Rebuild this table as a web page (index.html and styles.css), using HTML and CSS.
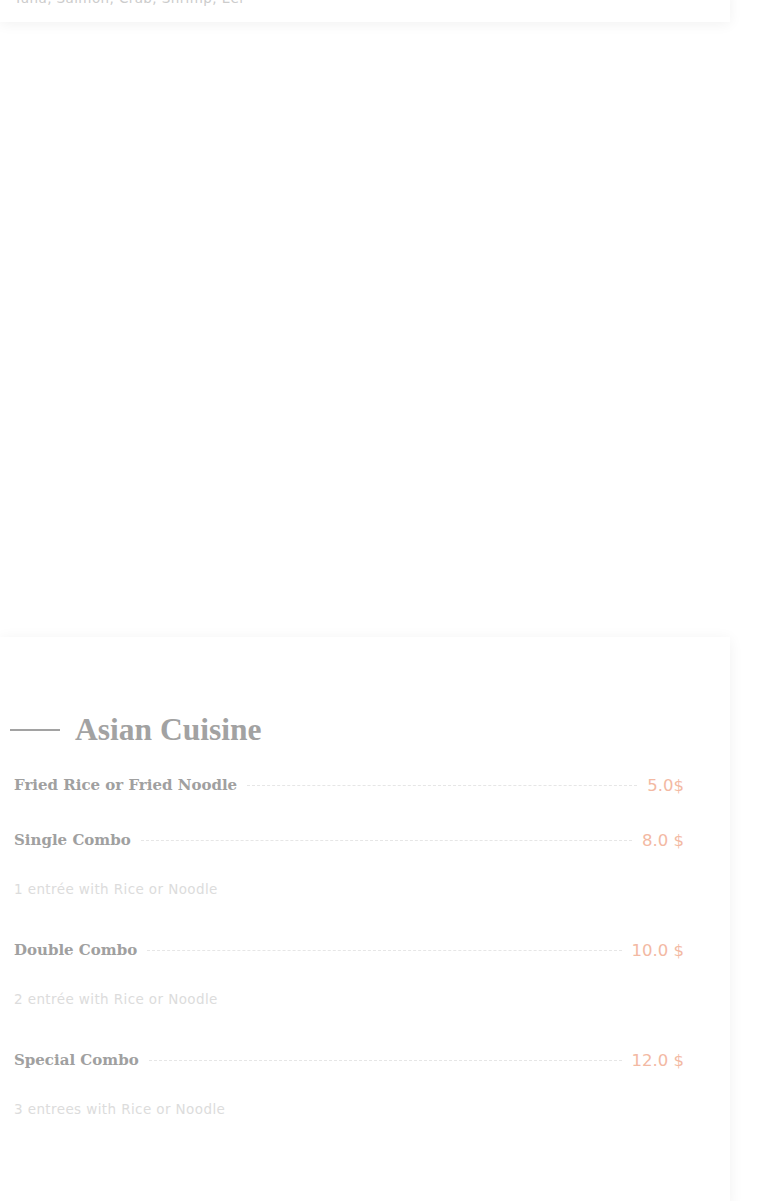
FILE: index.html
```html
<!DOCTYPE html>
<html lang="en">
<head>
<meta charset="utf-8">
<title>Menu</title>
<link rel="stylesheet" href="styles.css">
</head>
<body>
<main class="page">
  <section class="card card-top">
    <p class="desc desc-top">Tuna, Salmon, Crab, Shrimp, Eel</p>
  </section>

  <section class="card card-menu">
    <h2 class="heading"><span class="heading-line"></span>Asian Cuisine</h2>
    <div class="items">
      <div class="item">
        <div class="row"><span class="name">Fried Rice or Fried Noodle</span><span class="dots"></span><span class="price">5.0$</span></div>
      </div>
      <div class="item">
        <div class="row"><span class="name">Single Combo</span><span class="dots"></span><span class="price">8.0 $</span></div>
        <p class="desc">1 entrée with Rice or Noodle</p>
      </div>
      <div class="item">
        <div class="row"><span class="name">Double Combo</span><span class="dots"></span><span class="price">10.0 $</span></div>
        <p class="desc">2 entrée with Rice or Noodle</p>
      </div>
      <div class="item">
        <div class="row"><span class="name">Special Combo</span><span class="dots"></span><span class="price">12.0 $</span></div>
        <p class="desc">3 entrees with Rice or Noodle</p>
      </div>
    </div>
  </section>
</main>
</body>
</html>
```

FILE: styles.css
```css
html, body {
  margin: 0;
  padding: 0;
  background: #ffffff;
}

body {
  font-family: "DejaVu Sans", "Noto Sans", sans-serif;
  overflow: hidden;
}

.page {
  display: flex;
  flex-direction: column;
  width: 730px;
}

.card {
  background: #ffffff;
  box-shadow: 0 2px 14px rgba(0, 0, 0, 0.06);
  padding: 0 46px 0 14px;
}

.card-top {
  margin-top: -12px;
  padding-bottom: 14px;
}

.card-menu {
  margin-top: 615px;
  padding-top: 73px;
  padding-bottom: 80px;
}

.heading {
  display: flex;
  align-items: center;
  gap: 15px;
  margin: 0 0 23px -4px;
  height: 40px;
  font-family: "Liberation Serif", "DejaVu Serif", serif;
  font-weight: 700;
  font-size: 31.5px;
  color: #a2a2a2;
}

.heading-line {
  width: 50px;
  height: 2px;
  background: #a2a2a2;
}

.items {
  display: flex;
  flex-direction: column;
  gap: 31px;
}

.row {
  display: flex;
  align-items: center;
  height: 24px;
}

.name {
  font-family: "DejaVu Serif", "Liberation Serif", serif;
  font-weight: 700;
  font-size: 15px;
  color: #a0a0a0;
}

.dots {
  flex: 1;
  margin: 0 10px;
  border-bottom: 1px dashed #e6e6e6;
}

.price {
  font-family: "DejaVu Sans", sans-serif;
  font-size: 16.5px;
  color: #f3b9a3;
}

.desc {
  margin: 27px 0 8px;
  font-size: 13.5px;
  letter-spacing: 0.4px;
  line-height: 20px;
  color: #dcdcdc;
}

.desc-top {
  margin: 0;
  color: #cccccc;
}
```
